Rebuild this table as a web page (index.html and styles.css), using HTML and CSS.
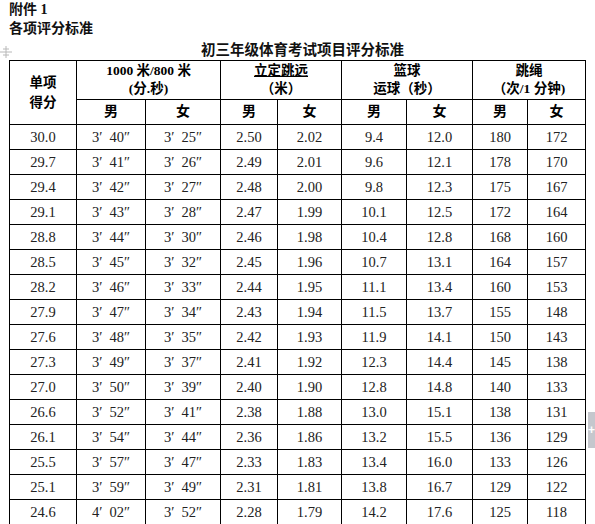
FILE: index.html
```html
<!DOCTYPE html>
<html lang="zh">
<head>
<meta charset="utf-8">
<link rel="stylesheet" href="styles.css">
</head>
<body>
<div class="page">
  <div class="line">附件 1</div>
  <div class="line">各项评分标准</div>
  <div class="title-row">
    <svg class="handle" width="12" height="14" viewBox="0 0 12 14"><g stroke="#b8b8b8" stroke-width="1" fill="none"><line x1="6" y1="1" x2="6" y2="13"/><line x1="0" y1="7" x2="12" y2="7"/><line x1="3" y1="4" x2="9" y2="4"/><line x1="3" y1="10" x2="9" y2="10"/></g></svg>
    <div class="title">初三年级体育考试项目评分标准</div>
  </div>
  <table class="grid">
    <colgroup>
      <col class="c1"><col class="c2"><col class="c3"><col class="c4"><col class="c5"><col class="c6"><col class="c7"><col class="c8"><col class="c9">
    </colgroup>
    <thead>
      <tr class="h1">
        <th rowspan="2" class="score-head">单项<br>得分</th>
        <th colspan="2">1000 米/800 米<br>(分.秒)</th>
        <th colspan="2"><span class="ul">立定跳远</span><br>（米）</th>
        <th colspan="2">篮球<br>运球（秒）</th>
        <th colspan="2">跳绳<br>（次/1 分钟)</th>
      </tr>
      <tr class="h2">
        <th>男</th><th>女</th><th>男</th><th>女</th><th>男</th><th>女</th><th>男</th><th>女</th>
      </tr>
    </thead>
    <tbody>
      <tr><td>30.0</td><td>3′&nbsp;&nbsp;40″</td><td>3′&nbsp;&nbsp;25″</td><td>2.50</td><td>2.02</td><td>9.4</td><td>12.0</td><td>180</td><td>172</td></tr>
      <tr><td>29.7</td><td>3′&nbsp;&nbsp;41″</td><td>3′&nbsp;&nbsp;26″</td><td>2.49</td><td>2.01</td><td>9.6</td><td>12.1</td><td>178</td><td>170</td></tr>
      <tr><td>29.4</td><td>3′&nbsp;&nbsp;42″</td><td>3′&nbsp;&nbsp;27″</td><td>2.48</td><td>2.00</td><td>9.8</td><td>12.3</td><td>175</td><td>167</td></tr>
      <tr><td>29.1</td><td>3′&nbsp;&nbsp;43″</td><td>3′&nbsp;&nbsp;28″</td><td>2.47</td><td>1.99</td><td>10.1</td><td>12.5</td><td>172</td><td>164</td></tr>
      <tr><td>28.8</td><td>3′&nbsp;&nbsp;44″</td><td>3′&nbsp;&nbsp;30″</td><td>2.46</td><td>1.98</td><td>10.4</td><td>12.8</td><td>168</td><td>160</td></tr>
      <tr><td>28.5</td><td>3′&nbsp;&nbsp;45″</td><td>3′&nbsp;&nbsp;32″</td><td>2.45</td><td>1.96</td><td>10.7</td><td>13.1</td><td>164</td><td>157</td></tr>
      <tr><td>28.2</td><td>3′&nbsp;&nbsp;46″</td><td>3′&nbsp;&nbsp;33″</td><td>2.44</td><td>1.95</td><td>11.1</td><td>13.4</td><td>160</td><td>153</td></tr>
      <tr><td>27.9</td><td>3′&nbsp;&nbsp;47″</td><td>3′&nbsp;&nbsp;34″</td><td>2.43</td><td>1.94</td><td>11.5</td><td>13.7</td><td>155</td><td>148</td></tr>
      <tr><td>27.6</td><td>3′&nbsp;&nbsp;48″</td><td>3′&nbsp;&nbsp;35″</td><td>2.42</td><td>1.93</td><td>11.9</td><td>14.1</td><td>150</td><td>143</td></tr>
      <tr><td>27.3</td><td>3′&nbsp;&nbsp;49″</td><td>3′&nbsp;&nbsp;37″</td><td>2.41</td><td>1.92</td><td>12.3</td><td>14.4</td><td>145</td><td>138</td></tr>
      <tr><td>27.0</td><td>3′&nbsp;&nbsp;50″</td><td>3′&nbsp;&nbsp;39″</td><td>2.40</td><td>1.90</td><td>12.8</td><td>14.8</td><td>140</td><td>133</td></tr>
      <tr><td>26.6</td><td>3′&nbsp;&nbsp;52″</td><td>3′&nbsp;&nbsp;41″</td><td>2.38</td><td>1.88</td><td>13.0</td><td>15.1</td><td>138</td><td>131</td></tr>
      <tr><td>26.1</td><td>3′&nbsp;&nbsp;54″</td><td>3′&nbsp;&nbsp;44″</td><td>2.36</td><td>1.86</td><td>13.2</td><td>15.5</td><td>136</td><td>129</td></tr>
      <tr><td>25.5</td><td>3′&nbsp;&nbsp;57″</td><td>3′&nbsp;&nbsp;47″</td><td>2.33</td><td>1.83</td><td>13.4</td><td>16.0</td><td>133</td><td>126</td></tr>
      <tr><td>25.1</td><td>3′&nbsp;&nbsp;59″</td><td>3′&nbsp;&nbsp;49″</td><td>2.31</td><td>1.81</td><td>13.8</td><td>16.7</td><td>129</td><td>122</td></tr>
      <tr><td>24.6</td><td>4′&nbsp;&nbsp;02″</td><td>3′&nbsp;&nbsp;52″</td><td>2.28</td><td>1.79</td><td>14.2</td><td>17.6</td><td>125</td><td>118</td></tr>
    </tbody>
  </table>
  <div class="side-tab">+</div>
</div>
</body>
</html>
```

FILE: styles.css
```css
html, body {
  margin: 0;
  padding: 0;
  background: #ffffff;
  overflow: hidden;
}
.page {
  position: relative;
  width: 595px;
  height: 524px;
  padding-left: 9px;
  box-sizing: border-box;
  font-family: "Liberation Serif", "Noto Sans CJK SC", serif;
  color: #111;
}
.line {
  font-family: "Liberation Serif", "Noto Sans CJK SC", sans-serif;
  font-weight: bold;
  font-size: 14px;
  line-height: 19px;
  height: 19px;
}
.title-row {
  position: relative;
  width: 577px;
  height: 20px;
  margin-top: 2px;
}
.handle {
  position: absolute;
  left: -9px;
  top: 5px;
}
.title {
  text-align: center;
  font-family: "Liberation Serif", "Noto Sans CJK SC", sans-serif;
  font-weight: bold;
  font-size: 14.5px;
  line-height: 20px;
  padding-left: 10px;
}
.grid {
  border-collapse: collapse;
  table-layout: fixed;
  width: 577px;
}
.c1 { width: 67px; }
.c2 { width: 69px; }
.c3 { width: 75px; }
.c4 { width: 57px; }
.c5 { width: 64px; }
.c6 { width: 65px; }
.c7 { width: 66px; }
.c8 { width: 55px; }
.c9 { width: 58px; }
.grid th, .grid td {
  border: 1px solid #000;
  padding: 0;
  text-align: center;
  white-space: nowrap;
}
.grid th {
  font-family: "Liberation Serif", "Noto Sans CJK SC", sans-serif;
  font-weight: bold;
  font-size: 13.5px;
  color: #000;
}
.h1 th {
  height: 38px;
  line-height: 18px;
}
.h2 th {
  height: 24px;
  line-height: 24px;
  font-size: 14px;
}
.score-head {
  line-height: 20px !important;
}
.ul {
  text-decoration: underline;
}
.grid td {
  height: 24px;
  line-height: 24px;
  font-size: 14.5px;
  color: #222;
}
.side-tab {
  position: absolute;
  left: 588px;
  top: 412px;
  width: 10px;
  height: 36px;
  background: #c5c7cd;
  color: #ffffff;
  font-family: "Liberation Sans", sans-serif;
  font-weight: bold;
  font-size: 12px;
  line-height: 36px;
  text-indent: 0px;
}
```
